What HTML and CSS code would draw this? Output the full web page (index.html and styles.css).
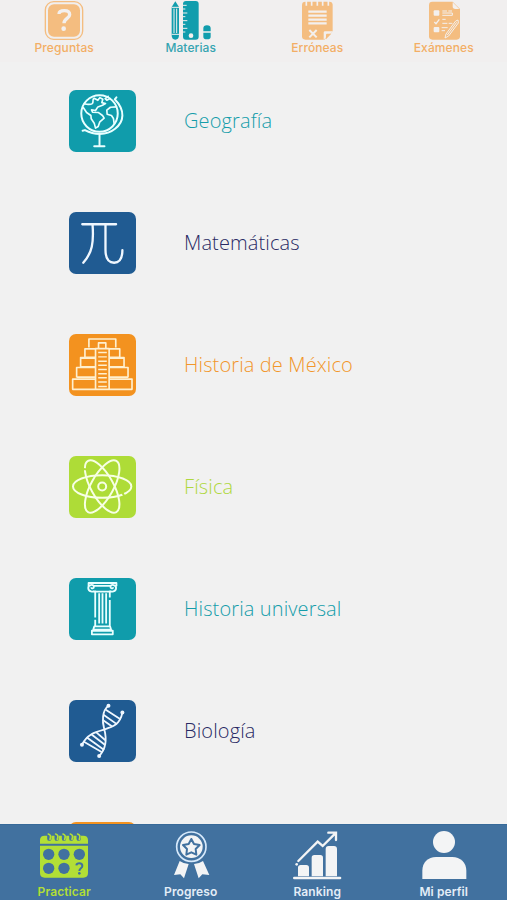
FILE: index.html
```html
<!DOCTYPE html>
<html lang="es">
<head>
<meta charset="utf-8">
<meta name="viewport" content="width=device-width">
<title>Materias</title>
<link rel="stylesheet" href="styles.css">
</head>
<body>
<div class="app">
  <nav class="top">
    <a class="tab">
      <svg class="top-icon" viewBox="102 0 180 123"><rect x="136" y="5" width="112" height="113" rx="25" fill="none" stroke="#f4bd80" stroke-width="4"/><rect x="144" y="13" width="96" height="97" rx="18" fill="#f4bd80"/><path d="M177 42c0-8 9-10 16-10 10 0 16 4 16 12 0 11-17 12-17 26" fill="none" stroke="#f3f0ee" stroke-width="10"/><circle cx="191" cy="86" r="7" fill="#f3f0ee"/></svg>
      <span class="label">Preguntas</span>
    </a>
    <a class="tab current">
      <svg class="top-icon" viewBox="481 0 180 123"><g fill="#119dad"><path d="M513 21L524 4l11 17v84q0 14-11 14t-11-14z"/><rect x="547" y="3" width="47" height="116" rx="9"/><path d="M608 94V85q0-9 11-9t11 9v9zM608 98h22v12q0 8-11 8t-11-8z"/></g><g stroke="#f3f0ee" stroke-width="3" fill="none"><path d="M520 26v73M528 26v73M513 22h22M513 103h22M546 16h12M546 27h8M546 39h14M546 50h8M546 62h14M546 73h8M546 85h14M546 96h8"/></g><circle cx="571" cy="107" r="7" fill="#f3f0ee"/></svg>
      <span class="label">Materias</span>
    </a>
    <a class="tab">
      <svg class="top-icon" viewBox="102 0 180 123"><path d="M157 5h72q10 0 10 10v78l-25 26h-57q-10 0-10-10V15q0-10 10-10z" fill="#f4bd80"/><g stroke="#f3f0ee" fill="none"><path d="M160 0v17M176 0v17M193 0v17M209 0v17M226 0v17" stroke-width="5"/><path d="M166 35h55M166 47h55M166 59h55M166 70h55" stroke-width="7"/><path d="M169 90l22 22M191 90l-22 22" stroke-width="6"/></g><path d="M212 119V98q0-4 4-4h23z" fill="#f3f0ee"/><path d="M219 118V104q0-3 3-3h13z" fill="#f4bd80"/></svg>
      <span class="label">Erróneas</span>
    </a>
    <a class="tab">
      <svg class="top-icon" viewBox="482 0 180 123"><path d="M537 5h61l22 22v82q0 10-10 10h-73q-10 0-10-10V15q0-10 10-10z" fill="#f4bd80"/><path d="M598 7v12q0 8 8 8h12z" fill="#f3f0ee"/><g fill="#f3f0ee"><rect x="541" y="31" width="17" height="16" rx="3"/><rect x="541" y="81" width="17" height="16" rx="3"/></g><g fill="none" stroke="#f3f0ee" stroke-width="3"><path d="M543 66l5 5 10-13" stroke-width="4"/><path d="M567 33h14m4 0h11M567 46h30v-7h-30M567 58h10M567 70h15m4 0h11M565 83h18M565 92h10"/><path d="M578 102l29-39 7-3 1 9-29 39-11 6z"/><path d="M582 105l28-38"/></g></svg>
      <span class="label">Exámenes</span>
    </a>
  </nav>

  <main class="list">
    <a class="row teal">
      <svg class="tile" viewBox="25 28 202 187"><g fill="none" stroke="#e9ffff" stroke-width="6" stroke-linecap="round" stroke-linejoin="round"><circle cx="117" cy="99" r="55"/><path d="M168 50l-5 6c33 34 28 68 1 89-27 22-65 18-91 4l-7 2M117 160v36M101 198h31"/><path d="M72 70c10 1 16 4 23-1 6-5-2-12 6-16l11 6 6-8 9 5-3 10 11 3-9 5-14 5-7 11-12-2 3 7 18 1 12 9 5 8-13 11-5 14-8 5-4-15-9-13-1-10-13-9-10-15M143 47l-9 7 5 5 10-5M168 79l-18 1-11 9 1 12 13 4 6 9 2 15" stroke-width="5"/></g></svg>
      <span class="name">Geografía</span>
    </a>
    <a class="row blue">
      <svg class="tile" viewBox="25 28 202 187"><path d="M65 65h102M96 66c4 54-1 85-28 115M135 66v76c0 26 8 39 26 39 17 0 25-14 25-38" fill="none" stroke="#eff7ff" stroke-width="7" stroke-linecap="round"/></svg>
      <span class="name">Matemáticas</span>
    </a>
    <a class="row orange">
      <svg class="tile" viewBox="25 28 202 187"><g fill="none" stroke="#fff0cf" stroke-width="5" stroke-linejoin="round"><path d="M85 69V43h81v26M114 70V55h22v15M105 194V72h41v122M104 73H73v26H60v28M146 73h32v26h13v28M104 101H61M146 101h43M104 129H48v30M146 129h57v30M48 134v-5M104 164H36v31h179v-31h-69M73 98h31M146 98h32M60 127h44M146 127h44M48 158h56M146 158h57"/><path d="M113 84h26M113 97h26M113 110h26M113 122h26M113 135h26M113 148h26M113 160h26M113 173h26M113 186h26" stroke-width="4.500"/></g></svg>
      <span class="name">Historia de México</span>
    </a>
    <a class="row green">
      <svg class="tile" viewBox="25 28 202 187"><g fill="none" stroke="#f7ffe4" stroke-width="6"><ellipse cx="125" cy="120" rx="88" ry="34"/><ellipse cx="125" cy="120" rx="88" ry="34" transform="rotate(61 125 120)"/><ellipse cx="125" cy="120" rx="88" ry="34" transform="rotate(-61 125 120)"/><circle cx="125" cy="120" r="12"/></g><path d="M67 67l13 2M186 139l7 12" stroke="#aedc37" stroke-width="6"/></svg>
      <span class="name">Física</span>
    </a>
    <a class="row teal">
      <svg class="tile" viewBox="25 28 202 187"><g fill="none" stroke="#e9ffff" stroke-width="5.500" stroke-linejoin="round"><path d="M102 67c-4 3-19 3-19-9 0-10 15-12 17-4 1 6-8 7-8 2M148 67c4 3 19 3 19-9 0-10-15-12-17-4-1 6 8 7 8 2M84 53V43h84v10M99 52h52M104 66v81M148 66v21M148 94v78M104 154v18M97 69h56M116 74v91M126 74v91M137 74v91M101 174h48l3 10H98zM94 187h63v11H94z"/></g></svg>
      <span class="name">Historia universal</span>
    </a>
    <a class="row blue">
      <svg class="tile" viewBox="25 28 202 187"><g fill="none" stroke="#eff7ff" stroke-width="5.500" stroke-linecap="round"><path d="M144 45c-20 16-19 48-13 70 7 26 9 57-15 82M186 66c-7 36-29 43-55 51-25 7-51 13-67 46"/><path d="M137 58l42 27M130 73l38 27M128 89l26 18M109 127l24 21M94 133l38 29M80 142l49 35M70 154l52 30"/></g><g fill="#eff7ff"><circle cx="144" cy="45" r="6"/><circle cx="186" cy="66" r="6"/><circle cx="64" cy="163" r="6"/><circle cx="116" cy="197" r="6"/></g></svg>
      <span class="name">Biología</span>
    </a>
    <a class="row orange"><svg class="tile" viewBox="25 28 202 187"></svg></a>
  </main>

  <nav class="bottom">
    <a class="tab current">
      <svg class="bottom-icon" viewBox="102 42 180 168"><path d="M120 101V90q0-13 14-13h116q14 0 14 13v11zM120 107h144v82q0 14-14 14H134q-14 0-14-14z" fill="#b2df36"/><g fill="#41719f"><circle cx="146" cy="133" r="17"/><circle cx="192" cy="133" r="17"/><circle cx="238" cy="133" r="17"/><circle cx="146" cy="175" r="17"/><circle cx="192" cy="175" r="17"/></g><g fill="none"><path d="M148 74v12M170 74v12M192 74v12M214 74v12M236 74v12" stroke="#41719f" stroke-width="13" stroke-linecap="round"/><path d="M145 72q10 3 5 16M167 72q10 3 5 16M189 72q10 3 5 16M211 72q10 3 5 16M233 72q10 3 5 16" stroke="#b2df36" stroke-width="5" stroke-linecap="round"/><path d="M229 166q1-6 9-6 9 0 9 8c0 7-9 7-9 15" stroke="#41719f" stroke-width="6"/></g><circle cx="238" cy="190" r="4" fill="#41719f"/></svg>
      <span class="label">Practicar</span>
    </a>
    <a class="tab">
      <svg class="bottom-icon" viewBox="481 42 180 168"><circle cx="572" cy="110" r="44" fill="none" stroke="#d6e9fb" stroke-width="5"/><circle cx="572" cy="110" r="34" fill="#f3f4f5"/><path d="M572 87l8 15 17 3-12 12 2 17-15-7-15 7 2-17-12-12 17-3z" fill="#f3f4f5" stroke="#41719f" stroke-width="6" stroke-linejoin="round"/><path d="M537 153q11 8 27 9l-14 43-11-12-19 2zM607 153q-11 8-27 9l14 43 11-12 21 2z" fill="#f3f4f5"/></svg>
      <span class="label">Progreso</span>
    </a>
    <a class="tab">
      <svg class="bottom-icon" viewBox="102 42 180 168"><g fill="#f3f4f5"><path d="M135 199v-26q0-8 8-8h17q8 0 8 8v26zM176 199v-56q0-8 8-8h18q8 0 8 8v56zM218 199v-82q0-9 9-9h16q9 0 9 9v82z"/><rect x="120" y="200" width="145" height="8" rx="4"/><circle cx="131" cy="163" r="4"/></g><path d="M136 153l58-58 15 13 38-38M226 68h23v22" fill="none" stroke="#f3f4f5" stroke-width="7" stroke-linecap="round" stroke-linejoin="miter"/></svg>
      <span class="label">Ranking</span>
    </a>
    <a class="tab">
      <svg class="bottom-icon" viewBox="482 42 180 168"><g fill="#f3f4f5"><circle cx="572" cy="96" r="33"/><path d="M507 207v-25c0-25 17-41 41-41h49c24 0 42 16 42 41v25z"/></g></svg>
      <span class="label">Mi perfil</span>
    </a>
  </nav>
</div>
</body>
</html>
```
FILE: styles.css
```css
* { box-sizing: border-box; }
body { margin: 0; background: #f1f1f1; font-family: Inter, "Liberation Sans", sans-serif; }
.app { height: 900px; display: flex; flex-direction: column; overflow: hidden; }
svg { display: block; flex: none; }
.top, .bottom { display: grid; grid-template-columns: repeat(4, 1fr); flex: none; padding-left: 1px; }
.top { height: 62px; background: #f1efef; color: #f3ae65; }
.top .current { color: #35a4b1; }
.tab { display: flex; flex-direction: column; align-items: center; }
.top-icon { width: 60px; height: 41px; }
.label { font-size: 12px; line-height: 14px; font-weight: 500; letter-spacing: .1px; white-space: nowrap; }
.list { flex: 1; min-height: 0; overflow: hidden; padding: 28px 0 0 68.500px; }
.row { display: flex; align-items: center; gap: 48.500px; height: 62px; margin-bottom: 60px; }
.tile { width: 67px; height: 62px; border-radius: 7px; }
.name { font-family: "Open Sans", "Noto Sans", sans-serif; font-size: 20px; font-weight: 320; line-height: 28px; letter-spacing: .12px; white-space: nowrap; }
.teal { color: #159daa; }
.teal .tile { background: #109cab; }
.blue { color: #292a64; }
.blue .tile { background: #205b92; }
.orange { color: #f2962a; }
.orange .tile { background: #f3921f; }
.green { color: #afd83e; }
.green .tile { background: #aedc37; }
.bottom { height: 76px; background: #41719f; color: #e3edf7; border-top: 1px solid #376a99; }
.bottom .current { color: #b2df36; }
.bottom-icon { width: 60px; height: 56px; margin-top: -1px; }
.bottom .label { margin-top: 5px; font-weight: 600; }
```
